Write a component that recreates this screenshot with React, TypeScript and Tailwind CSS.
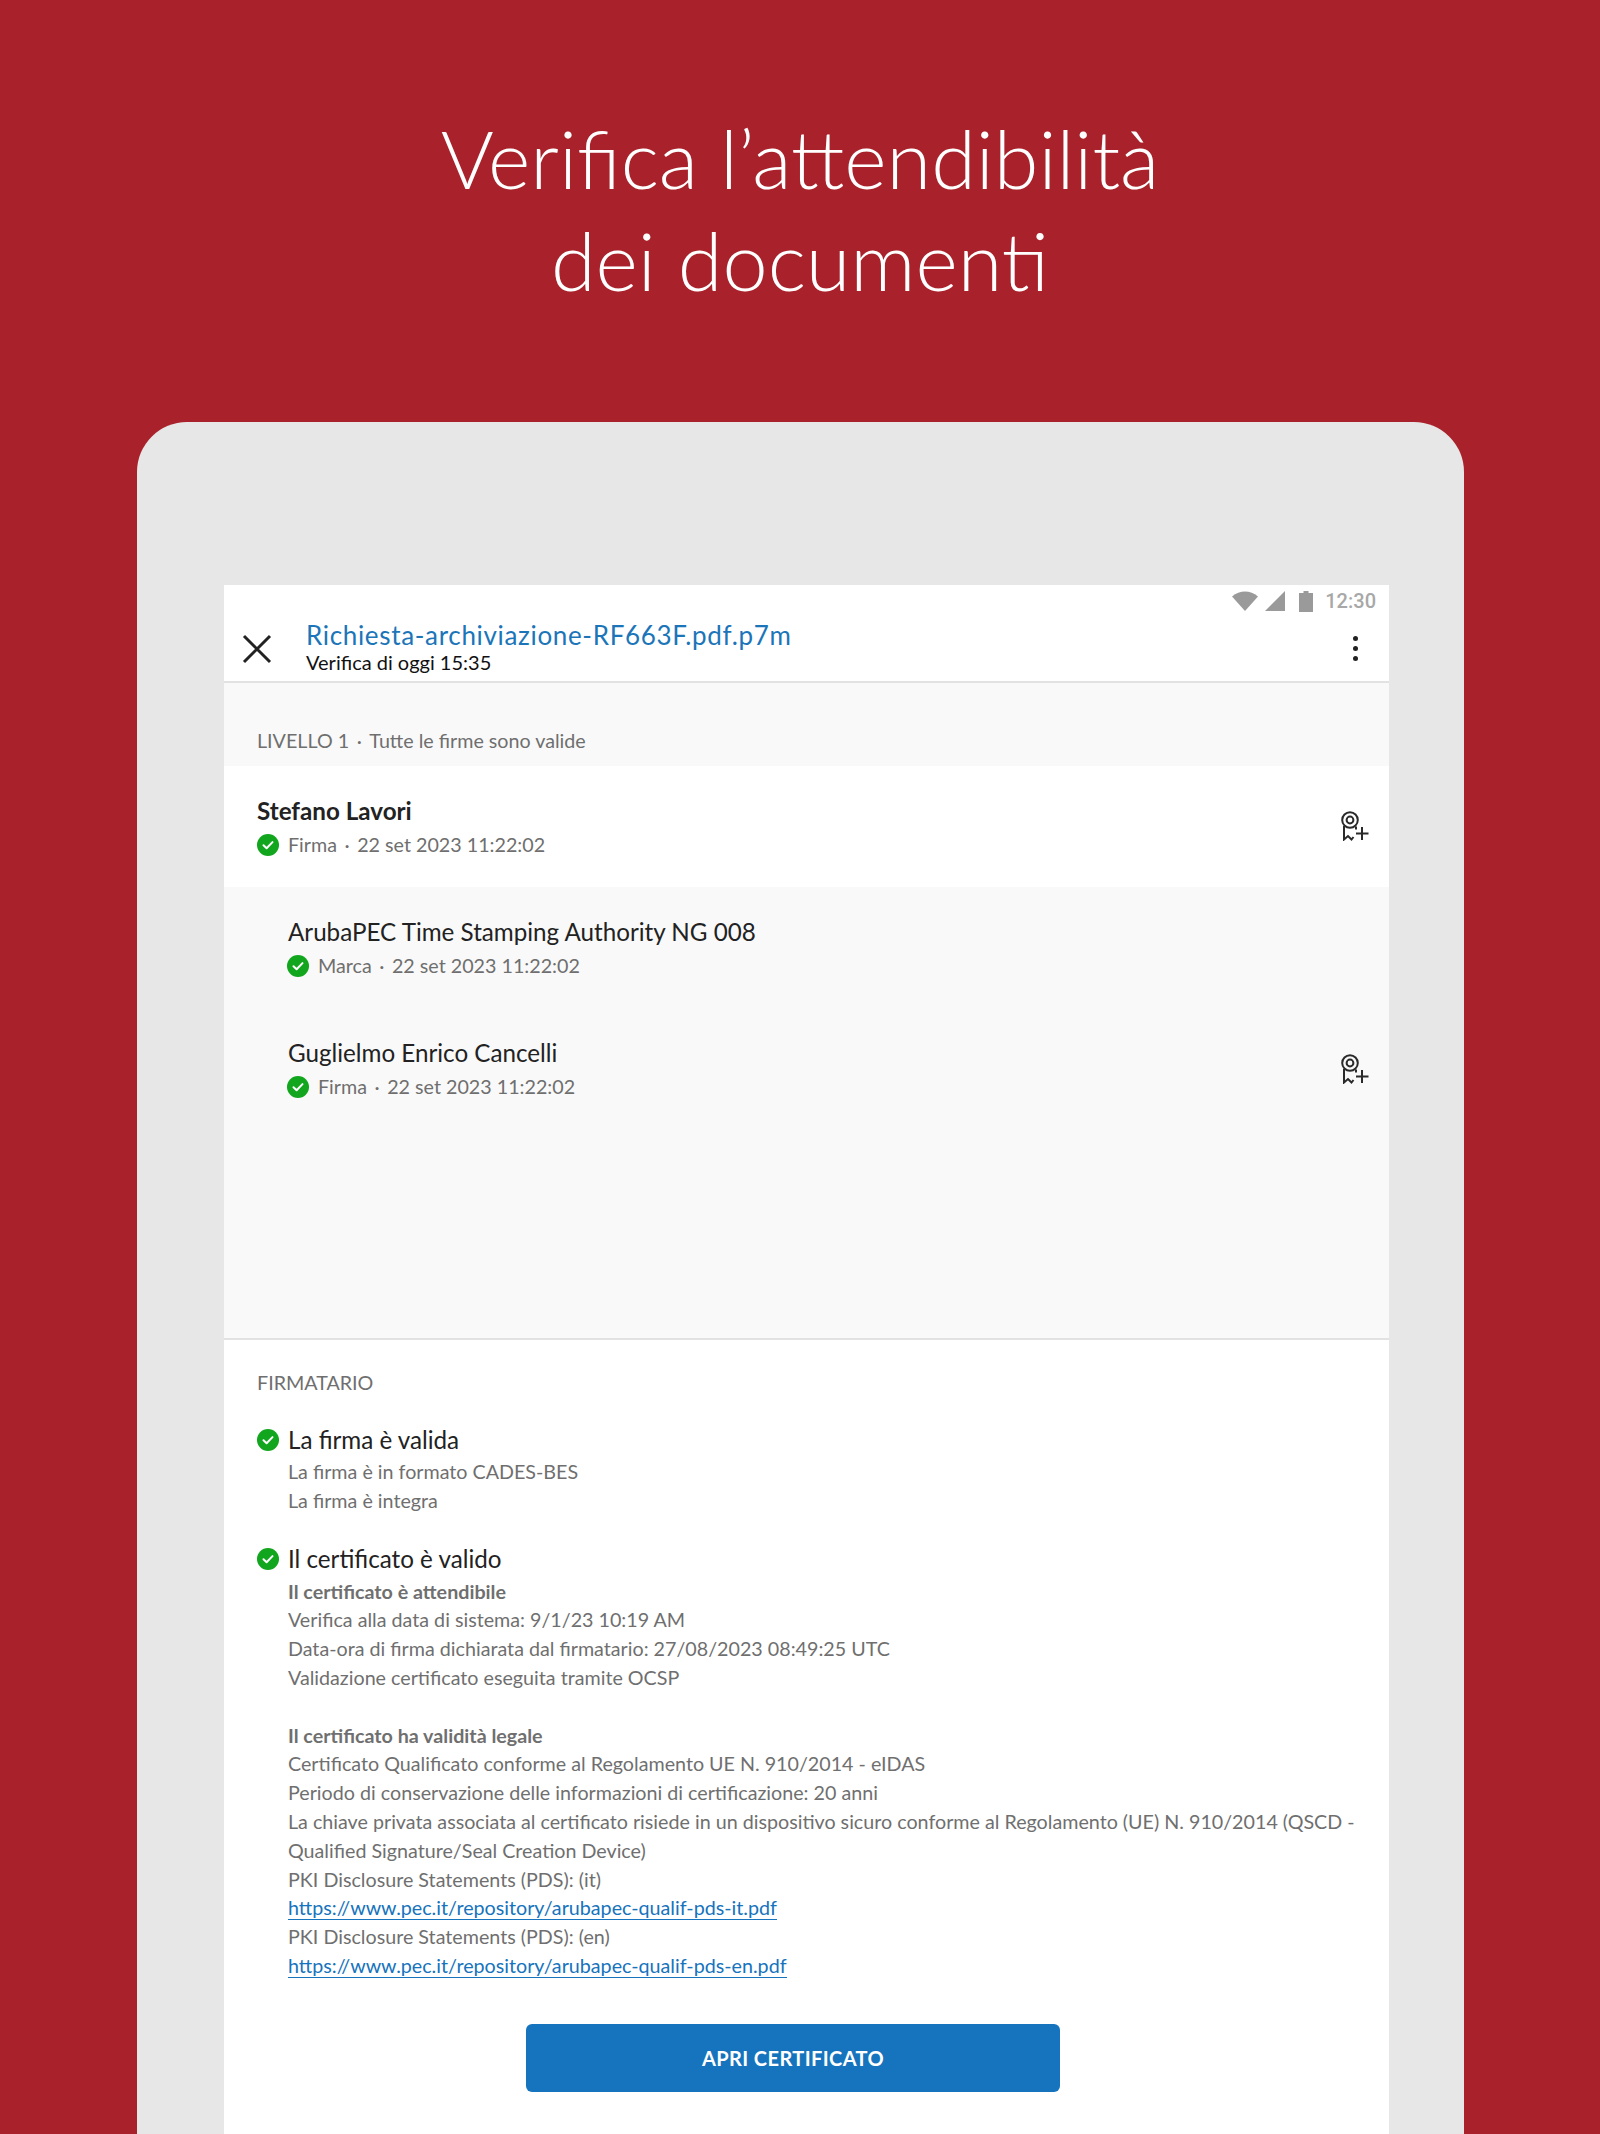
const CheckBadge = () => (
  <svg width="22" height="22" viewBox="0 0 22 22" className="shrink-0">
    <circle cx="11" cy="11" r="11" fill="#12a51e" />
    <path d="M6.5 11.3l3.1 3 5.9-6.2" fill="none" stroke="#fff" strokeWidth="2" strokeLinecap="round" strokeLinejoin="round" />
  </svg>
);

const SealPlus = () => (
  <svg width="28" height="30" viewBox="0 0 28 30" fill="none" stroke="#2a2a2a" strokeWidth="2" className="shrink-0">
    <circle cx="9" cy="9" r="7.800" />
    <circle cx="9" cy="9" r="3.400" />
    <path d="M3 15v13.500l4-3.500 3.500 3.500 2-2.500" />
    <path d="M15 15.500v3" />
    <path d="M15 22.500h12.500M21 16v13" />
  </svg>
);

const StatusBar = () => (
  <div className="flex h-[27px] items-center justify-end gap-[5px] pr-[13px] pt-[5px]">
    <svg width="28" height="22" viewBox="0 0 28 22" fill="#9a9a9a">
      <path d="M1 6.5C5 3 9.300 1.500 14 1.500S23 3 27 6.500L14 21z" />
    </svg>
    <svg width="22" height="22" viewBox="0 0 22 22" fill="#9a9a9a">
      <path d="M21 1v20H1z" />
    </svg>
    <svg width="14" height="22" viewBox="0 0 14 22" fill="#9a9a9a" className="ml-[8px] mr-[7px]">
      <path d="M4.500 1h5v2H14v19H0V3h4.500z" />
    </svg>
    <span className="font-['Roboto',sans-serif] text-[20px] font-medium leading-none text-[#a8a8a8]">12:30</span>
  </div>
);

const Dot = () => <span className="mx-[2.500px]"> · </span>;

const SignerRow = ({ name, type, bold, nested, seal }: { name: string; type: string; bold?: boolean; nested?: boolean; seal?: boolean }) => (
  <div className={`flex h-[121px] items-center justify-between pr-[20px] ${nested ? "pl-[63px]" : "pl-[33px]"}`}>
    <div>
      <div className={`text-[24.200px] leading-[30px] text-[#222] ${nested ? "pl-[1px]" : ""} ${bold ? "font-bold" : ""}`}>{name}</div>
      <div className="mt-[7px] flex items-center gap-[9px] text-[19.700px] leading-[24px] text-[#6f6f6f]">
        <CheckBadge />
        <span>{type}<Dot />22 set 2023 11:22:02</span>
      </div>
    </div>
    {seal && <div className={nested ? "" : "pb-[2px]"}><SealPlus /></div>}
  </div>
);

const Line = ({ children, bold }: { children: React.ReactNode; bold?: boolean }) => (
  <div className={`text-[19.700px] leading-[28.800px] text-[#6f6f6f] ${bold ? "font-bold" : ""}`}>{children}</div>
);

const Link = ({ children }: { children: React.ReactNode }) => (
  <div className="text-[19.700px] leading-[28.800px] text-[#1673bd]">
    <span className="border-b border-[#1673bd]">{children}</span>
  </div>
);

export default function App() {
  return (
    <div className="h-[2134px] overflow-hidden bg-[#a9212a] font-['Lato',sans-serif]">
      <h1 className="pt-[107px] text-center text-[81px] font-light leading-[102px] text-white">
        Verifica l’attendibilità
        <br />
        dei documenti
      </h1>

      <div className="ml-[137px] mr-[136px] mt-[111px] h-[1800px] rounded-t-[50px] bg-[#e7e7e7] pl-[87px] pr-[75px] pt-[163px]">
        <div className="bg-white">
          <StatusBar />
          <div className="flex h-[71px] items-center justify-between border-b-2 border-[#e2e2e2] pl-[18px] pr-[31px]">
            <div className="flex items-center">
              <svg width="30" height="30" viewBox="0 0 30 30" stroke="#222" strokeWidth="3" className="mr-[34px] mt-[4px]">
                <path d="M2 2l26 26M28 2L2 28" />
              </svg>
              <div>
                <div className="text-[26px] leading-[30px] tracking-[0.670px] text-[#1b75b8]">Richiesta-archiviazione-RF663F.pdf.p7m</div>
                <div className="text-[20px] leading-[24px] text-[#111]">Verifica di oggi 15:35</div>
              </div>
            </div>
            <div className="mt-[3px] flex flex-col gap-[5px]">
              <span className="h-[5px] w-[5px] rounded-full bg-[#222]" />
              <span className="h-[5px] w-[5px] rounded-full bg-[#222]" />
              <span className="h-[5px] w-[5px] rounded-full bg-[#222]" />
            </div>
          </div>

          <div className="bg-[#f9f9f9]">
            <div className="flex h-[83px] items-end pb-[13px] pl-[33px] text-[19.700px] leading-[24px] text-[#6f6f6f]">
              <span>LIVELLO 1<Dot />Tutte le firme sono valide</span>
            </div>
            <div className="bg-white">
              <SignerRow name="Stefano Lavori" type="Firma" bold seal />
            </div>
            <SignerRow name="ArubaPEC Time Stamping Authority NG 008" type="Marca" nested />
            <SignerRow name="Guglielmo Enrico Cancelli" type="Firma" nested seal />
            <div className="h-[211px] border-b-2 border-[#e2e2e2]" />
          </div>

          <div className="pl-[33px] pr-[24px] pt-[31px]">
            <div className="text-[19.700px] leading-[24px] text-[#6f6f6f]">FIRMATARIO</div>
            <div className="mb-[3px] mt-[30px] flex items-center gap-[9px] text-[24.200px] leading-[30px] text-[#222]">
              <CheckBadge />
              La firma è valida
            </div>
            <div className="pl-[31px]">
              <Line>La firma è in formato CADES-BES</Line>
              <Line>La firma è integra</Line>
            </div>
            <div className="mb-[4px] mt-[28px] flex items-center gap-[9px] text-[24.200px] leading-[30px] text-[#222]">
              <CheckBadge />
              Il certificato è valido
            </div>
            <div className="pl-[31px]">
              <Line bold>Il certificato è attendibile</Line>
              <Line>Verifica alla data di sistema: 9/1/23 10:19 AM</Line>
              <Line>Data-ora di firma dichiarata dal firmatario: 27/08/2023 08:49:25 UTC</Line>
              <Line>Validazione certificato eseguita tramite OCSP</Line>
              <div className="h-[28.800px]" />
              <Line bold>Il certificato ha validità legale</Line>
              <Line>Certificato Qualificato conforme al Regolamento UE N. 910/2014 - eIDAS</Line>
              <Line>Periodo di conservazione delle informazioni di certificazione: 20 anni</Line>
              <Line>La chiave privata associata al certificato risiede in un dispositivo sicuro conforme al Regolamento (UE) N. 910/2014 (QSCD - Qualified Signature/Seal Creation Device)</Line>
              <Line>PKI Disclosure Statements (PDS): (it)</Line>
              <Link>https://www.pec.it/repository/arubapec-qualif-pds-it.pdf</Link>
              <Line>PKI Disclosure Statements (PDS): (en)</Line>
              <Link>https://www.pec.it/repository/arubapec-qualif-pds-en.pdf</Link>
            </div>
            <button className="ml-[269px] mt-[43px] block h-[68px] w-[534px] rounded-[6px] bg-[#1673bd] text-[20px] font-bold tracking-[0.400px] text-white">
              APRI CERTIFICATO
            </button>
            <div className="h-[60px]" />
          </div>
        </div>
      </div>
    </div>
  );
}
